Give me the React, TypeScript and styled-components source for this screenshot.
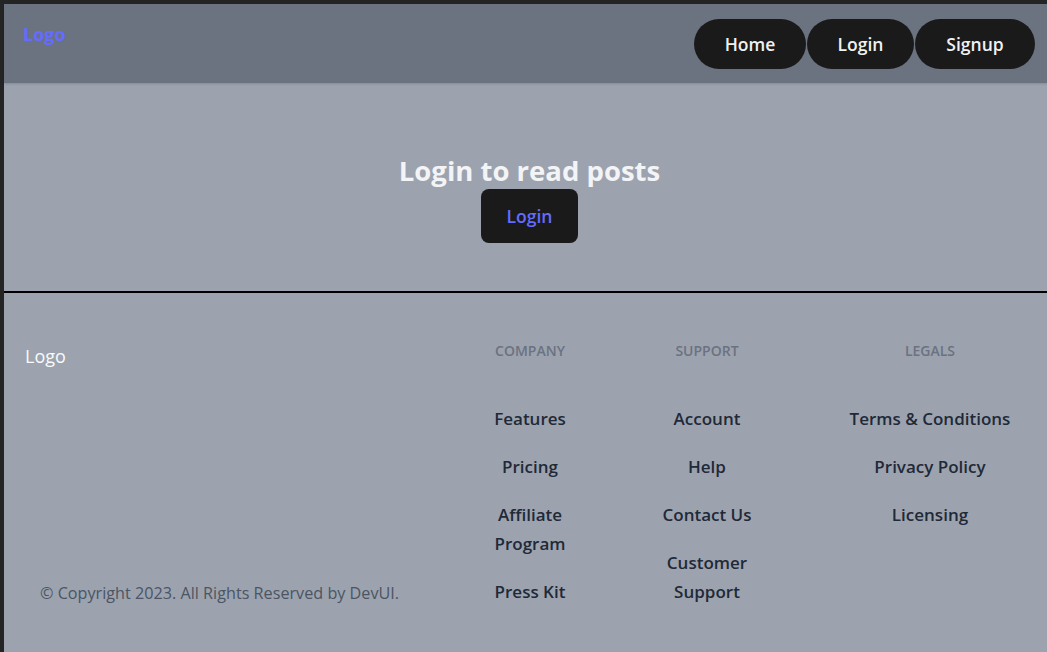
import React from "react";
import styled, { createGlobalStyle } from "styled-components";

const Global = createGlobalStyle`
  html, body { margin: 0; padding: 0; }
  body {
    background: #242424;
    padding: 4px 0 0 4px;
    font-family: "Open Sans", "Noto Sans", sans-serif;
    overflow: hidden;
  }
  * { box-sizing: border-box; }
`;

const Page = styled.div`
  display: flex;
  flex-direction: column;
  min-height: 648px;
  background: #9ca3af;
`;

const Header = styled.header`
  display: flex;
  justify-content: space-between;
  align-items: flex-start;
  height: 79px;
  padding: 19px 12px 0 19px;
  background: #6b7280;
  box-shadow: 0 1px 2px rgba(0, 0, 0, 0.15);
`;

const Brand = styled.a`
  color: #646cff;
  font-weight: 700;
  font-size: 18px;
  line-height: 22px;
  text-decoration: none;
`;

const Nav = styled.nav`
  display: flex;
  gap: 1px;
  margin-top: -4px;
`;

const NavButton = styled.button<{ $w: number }>`
  width: ${(p) => p.$w}px;
  height: 50px;
  border: none;
  border-radius: 25px;
  background: #1a1a1a;
  color: #f1f1f1;
  font-family: inherit;
  font-weight: 600;
  font-size: 17.5px;
`;

const Hero = styled.section`
  display: flex;
  flex-direction: column;
  align-items: center;
  height: 208px;
  padding-top: 70px;
`;

const Title = styled.h1`
  margin: 0 0 0 8px;
  color: #f3f4f6;
  font-size: 27.5px;
  font-weight: 700;
  line-height: 36px;
`;

const HeroButton = styled.button`
  width: 97px;
  height: 54px;
  margin-left: 8px;
  border: none;
  border-radius: 8px;
  background: #1a1a1a;
  color: #646cff;
  font-family: inherit;
  font-size: 17.5px;
  font-weight: 600;
`;

const Footer = styled.footer`
  flex: 1;
  border-top: 2px solid #000;
  padding-top: 49px;
`;

const FooterInner = styled.div`
  display: flex;
  align-items: stretch;
`;

const FooterLeft = styled.div`
  flex: 1;
  display: flex;
  flex-direction: column;
  justify-content: space-between;
  padding-bottom: 1px;
`;

const FooterLogo = styled.div`
  color: #f9fafb;
  font-size: 18px;
  line-height: 24px;
  padding-left: 21px;
  margin-top: 2px;
`;

const Copyright = styled.p`
  margin: 0;
  padding-left: 36px;
  color: #4b5563;
  font-size: 16.2px;
  line-height: 24px;
`;

const Columns = styled.div`
  display: flex;
  margin-right: 22px;
`;

const Column = styled.div<{ $w: number; $ml: number }>`
  flex: 0 0 ${(p) => p.$w}px;
  margin-left: ${(p) => p.$ml}px;
  display: flex;
  flex-direction: column;
  align-items: center;
  text-align: center;
`;

const ColHead = styled.h3`
  margin: 0 0 44px;
  color: #6b7280;
  font-size: 14px;
  font-weight: 600;
  line-height: 18px;
  text-transform: uppercase;
`;

const LinkList = styled.ul`
  list-style: none;
  margin: 0;
  padding: 0;
  display: flex;
  flex-direction: column;
  gap: 19px;
`;

const LinkItem = styled.li`
  color: #1f2937;
  font-size: 17px;
  font-weight: 600;
  line-height: 29px;
`;

const columns = [
  { title: "Company", w: 120, ml: 0, links: ["Features", "Pricing", "Affiliate Program", "Press Kit"] },
  { title: "Support", w: 130, ml: 52, links: ["Account", "Help", "Contact Us", "Customer Support"] },
  { title: "Legals", w: 190, ml: 63, links: ["Terms & Conditions", "Privacy Policy", "Licensing"] },
];

export default function App() {
  return (
    <>
      <Global />
      <Page>
        <Header>
          <Brand href="#">Logo</Brand>
          <Nav>
            <NavButton $w={112}>Home</NavButton>
            <NavButton $w={107}>Login</NavButton>
            <NavButton $w={120}>Signup</NavButton>
          </Nav>
        </Header>
        <Hero>
          <Title>Login to read posts</Title>
          <HeroButton>Login</HeroButton>
        </Hero>
        <Footer>
          <FooterInner>
            <FooterLeft>
              <FooterLogo>Logo</FooterLogo>
              <Copyright>© Copyright 2023. All Rights Reserved by DevUI.</Copyright>
            </FooterLeft>
            <Columns>
              {columns.map((c) => (
                <Column key={c.title} $w={c.w} $ml={c.ml}>
                  <ColHead>{c.title}</ColHead>
                  <LinkList>
                    {c.links.map((l) => (
                      <LinkItem key={l}>{l}</LinkItem>
                    ))}
                  </LinkList>
                </Column>
              ))}
            </Columns>
          </FooterInner>
        </Footer>
      </Page>
    </>
  );
}
